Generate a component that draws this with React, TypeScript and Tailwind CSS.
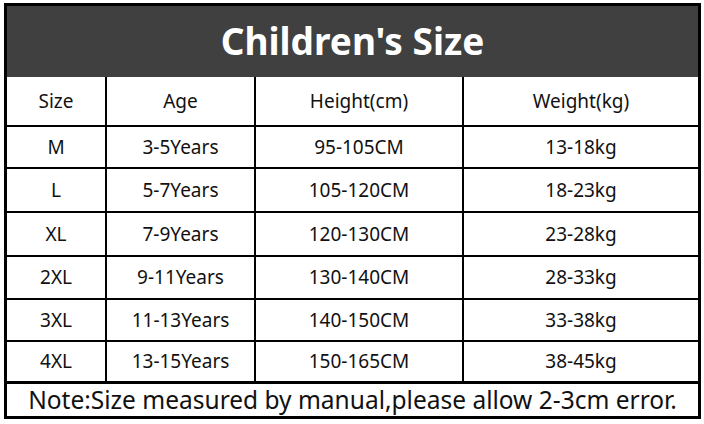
import React from "react";

const rows = [
  { s: "M", a: "3-5Years", h: "95-105CM", w: "13-18kg", ht: "h-[42px]" },
  { s: "L", a: "5-7Years", h: "105-120CM", w: "18-23kg", ht: "h-[44px]" },
  { s: "XL", a: "7-9Years", h: "120-130CM", w: "23-28kg", ht: "h-[44px]" },
  { s: "2XL", a: "9-11Years", h: "130-140CM", w: "28-33kg", ht: "h-[43px]" },
  { s: "3XL", a: "11-13Years", h: "140-150CM", w: "33-38kg", ht: "h-[42px]" },
];

function Row({ cells, ht, last }: { cells: string[]; ht: string; last?: boolean }) {
  return (
    <div
      className={`grid grid-cols-[100px_149px_208px_1fr] ${ht} ${
        last ? "border-b-[3px]" : "border-b-2"
      } border-black`}
    >
      {cells.map((c, i) => (
        <div
          key={i}
          className={`flex items-center justify-center ${i < 3 ? "border-r-2 border-black" : ""}`}
        >
          {c}
        </div>
      ))}
    </div>
  );
}

export default function App() {
  return (
    <div className="w-[704px] h-[424px] bg-white overflow-hidden pt-[3px] pl-[4px]">
      <div
        className="w-[697px] border-[3px] border-black text-[19px] text-[#111]"
        style={{ fontFamily: '"Noto Sans", "Open Sans", sans-serif' }}
      >
        <div className="h-[71px] bg-[#404040] flex items-center justify-center text-white font-bold text-[37px] pb-[2px]">
          Children's Size
        </div>
        <Row cells={["Size", "Age", "Height(cm)", "Weight(kg)"]} ht="h-[50px]" />
        {rows.map((r) => (
          <Row key={r.s} cells={[r.s, r.a, r.h, r.w]} ht={r.ht} />
        ))}
        <Row cells={["4XL", "13-15Years", "150-165CM", "38-45kg"]} ht="h-[42px]" last />
        <div className="h-[32px] flex items-center justify-center text-[24.5px] leading-none">
          Note:Size measured by manual,please allow 2-3cm error.
        </div>
      </div>
    </div>
  );
}
